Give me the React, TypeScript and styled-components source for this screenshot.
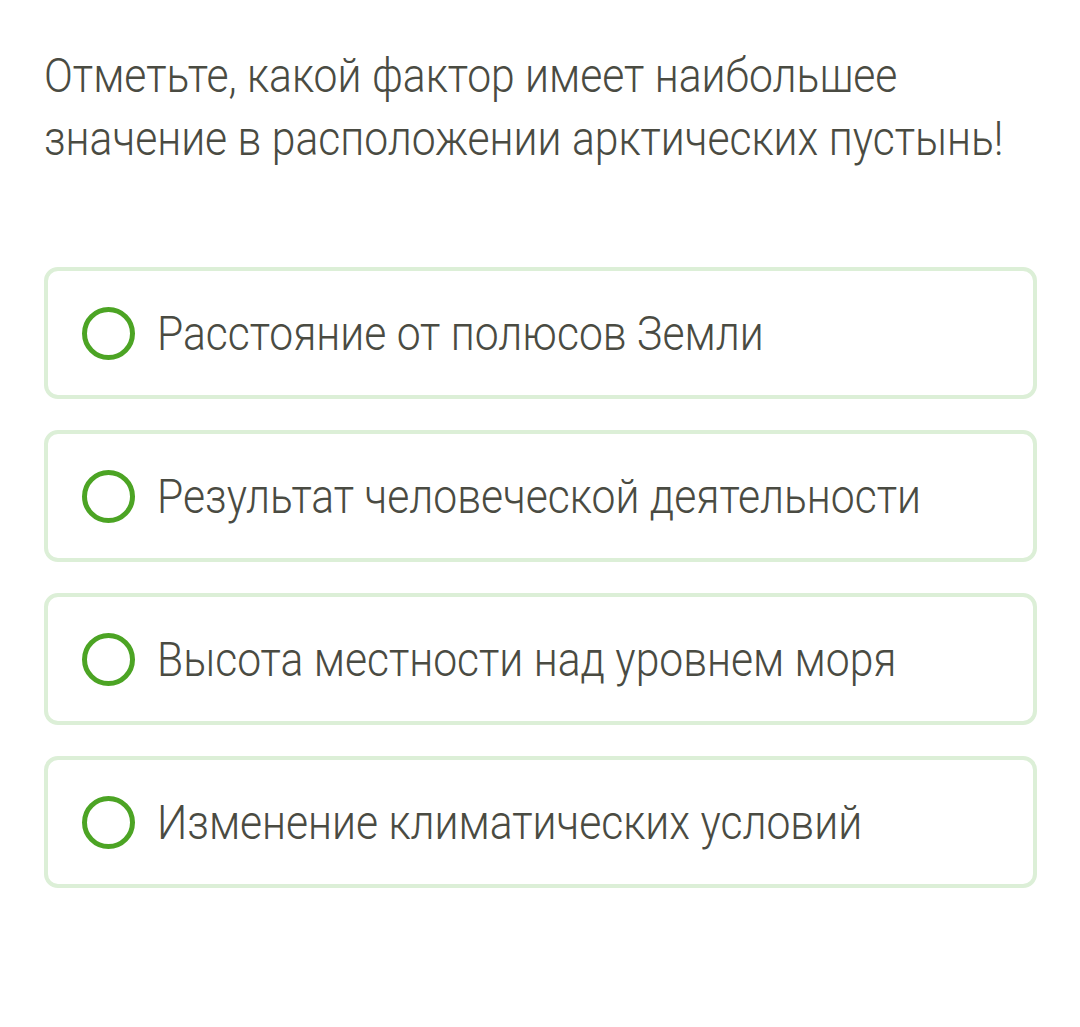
import React from "react";
import styled, { createGlobalStyle } from "styled-components";

const Global = createGlobalStyle`
  html, body { margin: 0; padding: 0; background: #ffffff; }
  body { font-family: Roboto, "Noto Sans", sans-serif; }
`;

const Page = styled.div`
  padding: 44px 44px 0 44px;
  display: flex;
  flex-direction: column;
`;

const Question = styled.h1`
  margin: 0 0 97px 0;
  font-family: Roboto, sans-serif;
  font-weight: 300;
  font-size: 49px;
  line-height: 63px;
  color: #4a4b42;
  white-space: nowrap;
  transform: scaleX(0.87);
  transform-origin: left top;
`;

const Options = styled.div`
  display: flex;
  flex-direction: column;
  gap: 31px;
  width: 993px;
`;

const Option = styled.label`
  box-sizing: border-box;
  height: 132px;
  border: 4px solid #dcefd7;
  border-radius: 14px;
  display: flex;
  align-items: center;
  padding-left: 34px;
  gap: 22px;
`;

const Radio = styled.span`
  box-sizing: border-box;
  width: 53px;
  height: 53px;
  border-radius: 50%;
  border: 5.5px solid #4ca424;
  flex: none;
`;

const Text = styled.span`
  display: inline-block;
  font-family: Roboto, sans-serif;
  font-weight: 300;
  font-size: 49px;
  color: #4a4b42;
  white-space: nowrap;
  transform: scaleX(0.87);
  transform-origin: left center;
`;

const options = [
  "Расстояние от полюсов Земли",
  "Результат человеческой деятельности",
  "Высота местности над уровнем моря",
  "Изменение климатических условий",
];

export default function App() {
  return (
    <Page>
      <Global />
      <Question>
        Отметьте, какой фактор имеет наибольшее
        <br />
        значение в расположении арктических пустынь!
      </Question>
      <Options>
        {options.map((o) => (
          <Option key={o}>
            <Radio />
            <Text>{o}</Text>
          </Option>
        ))}
      </Options>
    </Page>
  );
}
